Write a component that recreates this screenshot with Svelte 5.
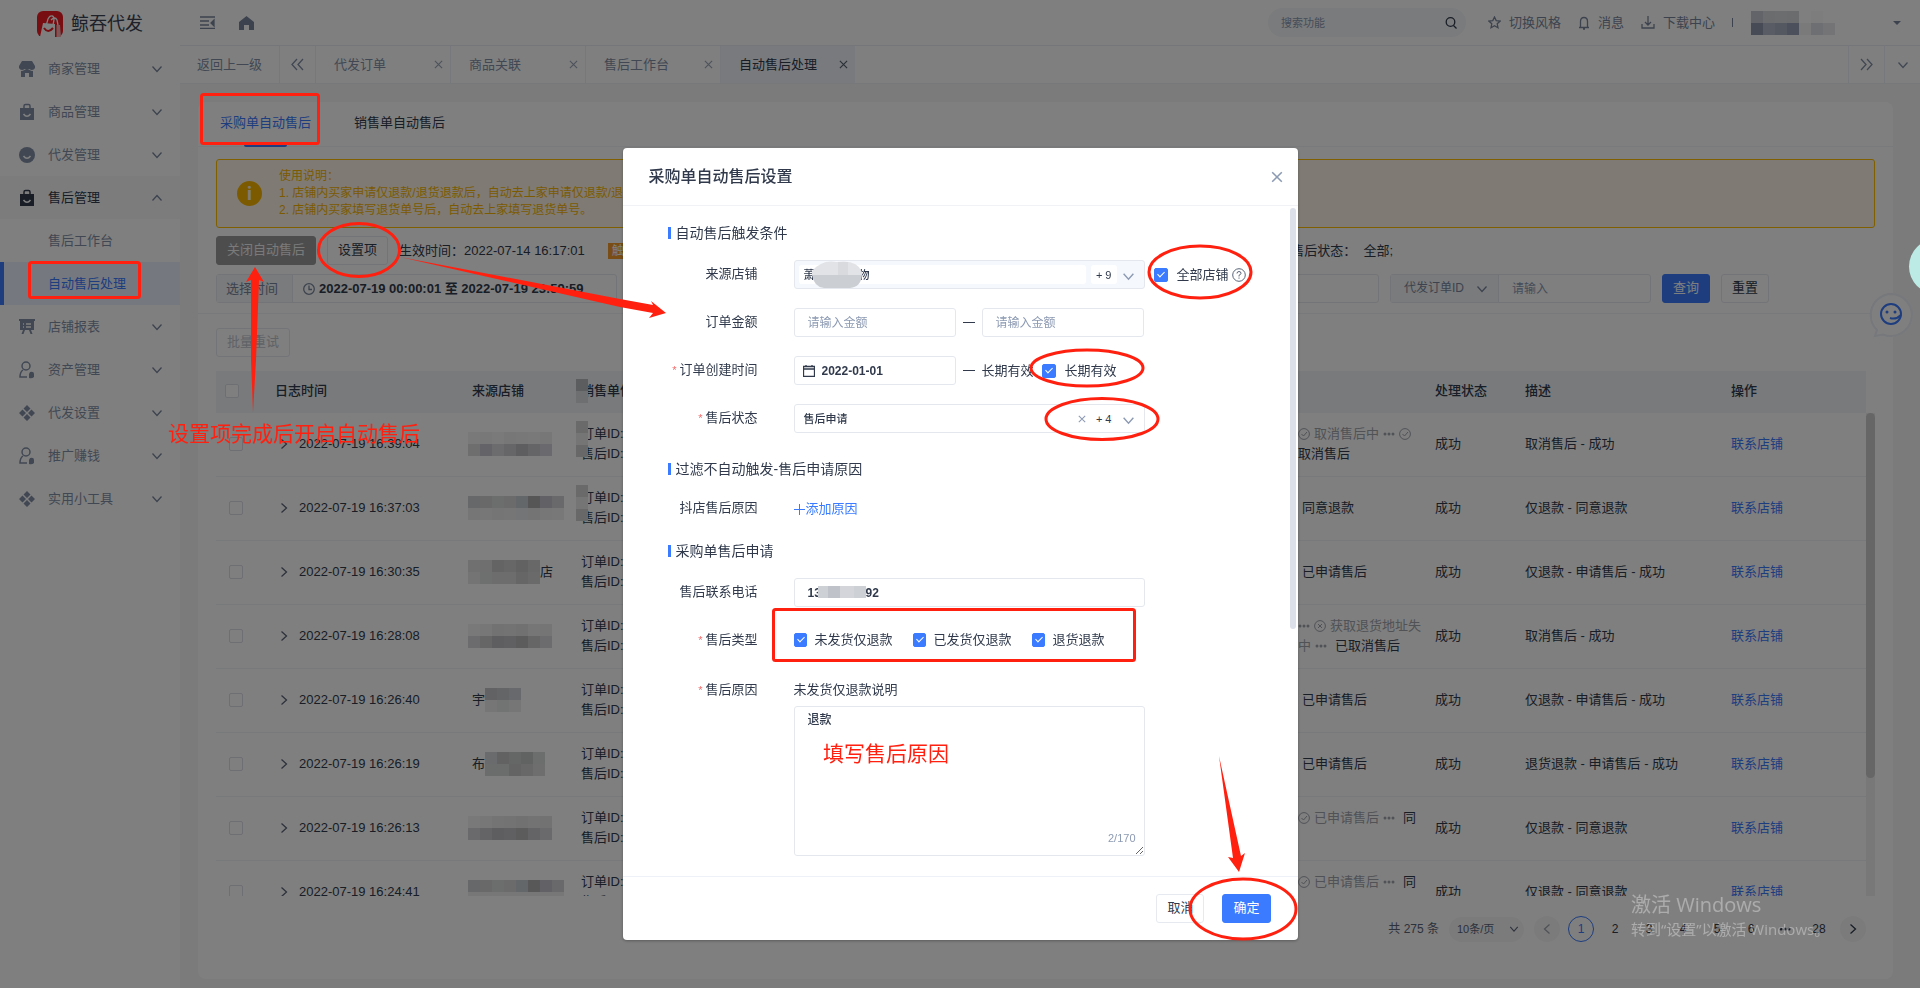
<script>
  const menu = [
    { name: '商家管理', icon: 'shop' },
    { name: '商品管理', icon: 'bag' },
    { name: '代发管理', icon: 'smile' },
    {
      name: '售后管理',
      icon: 'bag',
      open: true,
      children: ['售后工作台', '自动售后处理']
    },
    { name: '店铺报表', icon: 'board' },
    { name: '资产管理', icon: 'user' },
    { name: '代发设置', icon: 'grid' },
    { name: '推广赚钱', icon: 'user' },
    { name: '实用小工具', icon: 'grid' }
  ];

  const pageTabs = ['代发订单', '商品关联', '售后工作台', '自动售后处理'];
  const activePage = '自动售后处理';

  // masks hide shop names, one colour per 12px block
  const rows = [
    {
      time: '2022-07-19 16:39:04',
      mask: [['#f2f2f2', '#f0f0f0', '#f4f4f4', '#eee', '#f0f0f0', '#f2f2f2', '#eee'], ['#ddd', '#c8c9d0', '#d8d8dc', '#ccccd0', '#bdbcc0', '#cbcbcf', '#d4d4dc']],
      steps: [['ok', '取消售后中', 'dots', 'ok'], ['=取消售后']],
      desc: '取消售后 - 成功'
    },
    {
      time: '2022-07-19 16:37:03',
      mask: [['#cfd0d3', '#d2d2d4', '#d8dadb', '#d6d6d8', '#c9ced3', '#acacae', '#c5c4cc', '#d2d2d8'], ['#ececec', '#eee', '#eaeaea', '#ededed', '#e8eaec', '#e8e8e8', '#eee', '#f0f0f0']],
      steps: [['-同意退款']],
      desc: '仅退款 - 同意退款'
    },
    {
      time: '2022-07-19 16:30:35',
      mask: [['#e0e0e0', '#dedede', '#c8c8c8', '#cecece', '#c4c4c4', '#d0d0d0'], ['#e8e8e8', '#dcdfdf', '#dadada', '#dadada', '#ccc', '#d4d4d4']],
      tail: '店',
      steps: [['-已申请售后']],
      desc: '仅退款 - 申请售后 - 成功'
    },
    {
      time: '2022-07-19 16:28:08',
      mask: [['#f2f2f2', '#eee', '#e4e4e4', '#e6e6e6', '#e2e2e2', '#ececec', '#eaeaea'], ['#d8d8dc', '#ccc', '#bcbdc2', '#c0c0c4', '#b8b8ba', '#ccc', '#d8d8dc']],
      steps: [['dots', 'fail', '获取退货地址失'], ['中', 'dots', '=已取消售后']],
      desc: '取消售后 - 成功'
    },
    {
      time: '2022-07-19 16:26:40',
      lead: '宇',
      mask: [['#c4c5c8', '#c8cace', '#d0d2d8'], ['#ececec', '#e4e7e6', '#ececec']],
      steps: [['-已申请售后']],
      desc: '仅退款 - 申请售后 - 成功'
    },
    {
      time: '2022-07-19 16:26:19',
      lead: '布',
      mask: [['#d4d6d8', '#c4c4c4', '#cacccc', '#c2c4c4', '#d8dada'], ['#d6d8d8', '#d6d8d8', '#c8c8c8', '#d0d0d0', '#dcdcdc']],
      steps: [['-已申请售后']],
      desc: '退货退款 - 申请售后 - 成功'
    },
    {
      time: '2022-07-19 16:26:13',
      mask: [['#f2f2f2', '#eee', '#e8e8e8', '#e6e6e6', '#e2e2e2', '#e6e6e6', '#e4e4e4'], ['#d4d4d8', '#c8c8cc', '#bcbdc2', '#c0c0c4', '#b8b8ba', '#c8c8cc', '#d4d4d8']],
      steps: [['ok', '已申请售后', 'dots', '=同'], []],
      desc: '仅退款 - 同意退款'
    },
    {
      time: '2022-07-19 16:24:41',
      mask: [['#cfd0d3', '#d2d2d4', '#d8dadb', '#d6d6d8', '#c9ced3', '#b0b0b2', '#c5c4cc', '#d2d2d8'], ['#eee', '#eee', '#eee', '#eee', '#eee', '#eee', '#eee', '#eee']],
      steps: [['ok', '已申请售后', 'dots', '=同'], []],
      desc: '仅退款 - 同意退款'
    }
  ];

  const pages = ['1', '2', '3', '4', '5', '6', '…', '28'];

  let types = $state([
    { name: '未发货仅退款', checked: true },
    { name: '已发货仅退款', checked: true },
    { name: '退货退款', checked: true }
  ]);
  let reason = $state('退款');
  let allShops = $state(true);
  let longTerm = $state(true);
</script>

{#snippet chevron(dir = 'down', size = 12)}
  <svg class="chevron {dir}" width={size} height={size} viewBox="0 0 12 12"><path d="M1.5 3.5 6 8.5l4.500-5" /></svg>
{/snippet}

{#snippet cross(size = 9)}
  <svg class="line" width={size} height={size} viewBox="0 0 10 10"><path d="m1 1 8 8M9 1 1 9" /></svg>
{/snippet}

{#snippet dots()}
  <svg class="fill" width="12" height="4" viewBox="0 0 12 4"><circle cx="2" cy="2" r="1.500" /><circle cx="6" cy="2" r="1.500" /><circle cx="10" cy="2" r="1.500" /></svg>
{/snippet}

{#snippet mask(blocks)}
  <svg width={blocks[0].length * 12} height={blocks.length * 12} shape-rendering="crispEdges">
    {#each blocks as line, y}
      {#each line as color, x}
        <rect x={x * 12} y={y * 12} width="12" height="12" fill={color} />
      {/each}
    {/each}
  </svg>
{/snippet}

{#snippet menuIcon(name)}
  <svg class="menu-icon" width="18" height="18" viewBox="0 0 18 18">
    {#if name === 'shop'}
      <path d="M4 1h10l3 5v2q-1 2-3 2-1.500 0-2.500-1-1 1-2.500 1T6.500 9q-1 1-2.500 1-2 0-3-2V6z" />
      <path d="M3 11q2 0 3.500-1h5q1.500 1 3.500 1v6h-4v-4H7v4H3z" />
    {:else if name === 'bag'}
      <path d="M2 5h14v12H2z" />
      <path class="stroke" d="M6 5V3q0-1.500 1.500-1.500h3Q12 1.500 12 3v2" />
      <path class="cut" d="M5.500 11q3.500 4.500 7 0" />
    {:else if name === 'smile'}
      <circle cx="9" cy="9" r="8" />
      <path class="cut" d="M5.500 10q3.500 4.500 7 0" />
    {:else if name === 'board'}
      <path d="M1 1h16v2H1zM2 3h14v9H2zM5 12h2l-1.500 4h-2zM11 12h2l1.500 4h-2z" />
      <path class="cut" d="M5 6h1M8 6h5M5 9h1M8 9h5" />
    {:else if name === 'user'}
      <circle class="stroke" cx="8" cy="5" r="4" />
      <path class="stroke" d="M5 9Q2 11 2 16h7" />
      <path d="M12 11q4-1 4 2v3q-2 2-5 1v-4z" />
    {:else}
      <path d="m9 1 3.500 3.500L9 8 5.500 4.500zM4.500 5.500 8 9l-3.500 3.500L1 9zM13.500 5.500 17 9l-3.500 3.500L10 9zM9 10l3.500 3.500L9 17l-3.500-3.500z" />
    {/if}
  </svg>
{/snippet}

<div class="layout">
  <aside class="sidebar">
    <div class="logo">
      <svg width="26" height="26" viewBox="0 0 26 26">
        <rect width="26" height="26" rx="6" fill="#f01c24" />
        <path d="m6 12 12 1v13H3z" fill="#fff" />
        <path d="M19.500 14H23l1 12h-4.500z" fill="#f8b0b2" />
        <path d="M9 15 11 8q2-4 4-3 2 0 2 4l-1 5M14 9q4-4 6 0l1 5" fill="none" stroke="#fff" stroke-width="1.300" />
        <path d="M7 17q4 6 9 0" fill="none" stroke="#f01c24" stroke-width="2" />
      </svg>
      <span>鲸吞代发</span>
    </div>
    <nav>
      {#each menu as item}
        <a class="menu-item" class:open={item.open} href="#menu">
          {@render menuIcon(item.icon)}
          <span>{item.name}</span>
          {@render chevron(item.open ? 'up' : 'down', 12)}
        </a>
        {#each item.children ?? [] as child}
          <a class="sub-item" class:active={child === activePage} href="#sub">{child}</a>
        {/each}
      {/each}
    </nav>
  </aside>

  <div class="main">
    <header class="topbar">
      <svg class="line" width="15" height="13" viewBox="0 0 15 13"><path d="M0 1h15M0 5h9M0 9h9M0 12.500h15" /><path class="solid" d="m14 4-3 3 3 3z" /></svg>
      <svg class="fill home" width="15" height="14" viewBox="0 0 15 14"><path d="M7.500 0 15 6v8h-5V9H5v5H0V6z" /></svg>
      <label class="search">
        <input type="text" placeholder="搜索功能" aria-label="搜索功能" />
        <svg width="12" height="12" viewBox="0 0 12 12"><circle cx="5.500" cy="5" r="4.300" /><path d="m8.500 8.500 3 3" /></svg>
      </label>
      <div class="top-links">
        <a href="#theme">
          <svg class="line" width="13" height="13" viewBox="0 0 13 13"><path d="m6.500 1 1.700 3.600 3.900.5-2.900 2.700.8 3.900-3.500-1.900L3 11.700l.8-3.900L.9 5.100l3.900-.5z" /></svg>
          切换风格
        </a>
        <a href="#message">
          <svg class="line" width="12" height="14" viewBox="0 0 12 14"><path d="M1 11.500h10M2.500 11V5.500q0-4 3.500-4t3.500 4V11M5 13h2" /></svg>
          消息
        </a>
        <a href="#download">
          <svg class="line" width="14" height="13" viewBox="0 0 14 13"><path d="M1 8v4h12V8M7 0v9M4 6l3 3 3-3" /></svg>
          下载中心
        </a>
        <i class="bar"></i>
      </div>
      <div class="account">
        {@render mask([['#c5c9d4', '#d6d8dc', '#d8dadf', '#d6d8dd', '#fff', '#fafafa', '#fff'], ['#8f97ab', '#b3b9c8', '#a9b0c2', '#98a1b8', '#f4f4f4', '#dcdee4', '#e8e9ee']])}
        <i class="caret"></i>
      </div>
    </header>

    <div class="page-tabs">
      <a class="back" href="#back">返回上一级</a>
      <button class="nav-btn" aria-label="向左">
        <svg class="line" width="13" height="13" viewBox="0 0 13 13"><path d="M6 1 1 6.500 6 12M12 1 7 6.500l5 5.500" /></svg>
      </button>
      {#each pageTabs as tab}
        <div class="page-tab" class:active={tab === activePage}>
          <span>{tab}</span>
          <button aria-label="关闭{tab}">{@render cross(9)}</button>
        </div>
      {/each}
      <div class="tabs-end">
        <button class="nav-btn" aria-label="向右">
          <svg class="line" width="13" height="13" viewBox="0 0 13 13"><path d="m1 1 5 5.500L1 12M7 1l5 5.500L7 12" /></svg>
        </button>
        <button class="nav-btn" aria-label="更多">{@render chevron()}</button>
      </div>
    </div>

    <section class="card">
      <div class="tabs">
        <a class="tab active" href="#purchase">采购单自动售后</a>
        <a class="tab" href="#sale">销售单自动售后</a>
      </div>

      <div class="card-body">
        <div class="alert">
          <span class="alert-icon">i</span>
          <div>
            <div>使用说明：</div>
            <div>1. 店铺内买家申请仅退款/退货退款后，自动去上家申请仅退款/退货退款。</div>
            <div>2. 店铺内买家填写退货单号后，自动去上家填写退货单号。</div>
          </div>
        </div>

        <div class="toolbar">
          <button class="btn dark">关闭自动售后</button>
          <button class="btn">设置项</button>
          <span>生效时间：2022-07-14 16:17:01</span>
          <span class="tag">触发</span>
          <span class="state">售后状态：&nbsp; 全部;</span>
        </div>

        <div class="filters">
          <div class="group range">
            <span class="addon">选择时间</span>
            <svg class="line" width="12" height="12" viewBox="0 0 12 12"><circle cx="6" cy="6" r="5.300" /><path d="M6 2.500V6.500h3" /></svg>
            <b>2022-07-19 00:00:01 至 2022-07-19 23:59:59</b>
          </div>
          <input class="field" type="text" aria-label="订单编号" />
          <div class="group">
            <div class="select">
              <select aria-label="编号类型"><option>代发订单ID</option></select>
              {@render chevron()}
            </div>
            <input type="text" placeholder="请输入" aria-label="编号" />
          </div>
          <button class="btn primary">查询</button>
          <button class="btn">重置</button>
        </div>

        <button class="btn batch" disabled>批量重试</button>

        <div class="table-wrap">
          <table>
            <colgroup>
              <col class="c-check" /><col class="c-time" /><col class="c-shop" /><col /><col class="c-step" />
              <col class="c-status" /><col class="c-desc" /><col class="c-action" />
            </colgroup>
            <thead>
              <tr>
                <th><input type="checkbox" aria-label="全选" /></th>
                <th>日志时间</th>
                <th>来源店铺</th>
                <th><span class="cover">{@render mask([['#b8babd'], ['#dcdee2']])}</span>销售单信息</th>
                <th></th>
                <th>处理状态</th>
                <th>描述</th>
                <th>操作</th>
              </tr>
            </thead>
            <tbody>
              {#each rows as row, i}
                <tr>
                  <td class="check"><input type="checkbox" aria-label={row.time} /></td>
                  <td><div class="time">{@render chevron('right', 12)}{row.time}</div></td>
                  <td>
                    <div class="shop" class:masked={!row.lead}>{row.lead ?? ''}{@render mask(row.mask)}{row.tail ?? ''}</div>
                  </td>
                  <td>
                    {#if i < 2}
                      <span class="cover">{@render mask([['#d4d4d6'], ['#eaeaea'], ['#d0d0d2']])}</span>
                    {/if}
                    <div>订单ID:</div>
                    <div>售后ID:</div>
                  </td>
                  <td>
                    {#each row.steps as line}
                      <div class="steps">
                        {#each line as step}
                          {#if step === 'dots'}
                            {@render dots()}
                          {:else if step === 'ok'}
                            <svg class="thin" width="12" height="12" viewBox="0 0 12 12"><circle cx="6" cy="6" r="5.400" /><path d="m3.500 6 2 2 3.500-4" /></svg>
                          {:else if step === 'fail'}
                            <svg class="thin" width="12" height="12" viewBox="0 0 12 12"><circle cx="6" cy="6" r="5.400" /><path d="m4 4 4 4M8 4 4 8" /></svg>
                          {:else if step[0] === '-'}
                            <span class="result">{step.slice(1)}</span>
                          {:else if step[0] === '='}
                            <span class:result={line.length > 1} class:strong={line.length === 1}>{step.slice(1)}</span>
                          {:else}
                            <span>{step}</span>
                          {/if}
                        {/each}
                      </div>
                    {/each}
                  </td>
                  <td>成功</td>
                  <td>{row.desc}</td>
                  <td><a href="#contact">联系店铺</a></td>
                </tr>
              {/each}
            </tbody>
          </table>
          <div class="scroll"><i></i></div>
        </div>

        <div class="pagination">
          <span>共 275 条</span>
          <div class="page-size">
            <select aria-label="每页条数"><option>10条/页</option></select>
            {@render chevron('down', 10)}
          </div>
          <button class="page round" aria-label="上一页" disabled>{@render chevron('left', 12)}</button>
          {#each pages as page}
            <button class="page" class:current={page === '1'}>
              {#if page === '…'}{@render dots()}{:else}{page}{/if}
            </button>
          {/each}
          <button class="page round" aria-label="下一页">{@render chevron('right', 12)}</button>
        </div>
      </div>
    </section>
  </div>
</div>

<button class="service" aria-label="客服">
  <svg width="52" height="52" viewBox="0 0 52 52">
    <path class="bubble" d="M26 5a21 21 0 1 1-8 40.500L10 47l2-6A21 21 0 0 1 26 5z" />
    <circle class="ring" cx="26" cy="25" r="10" />
    <circle cx="22" cy="23" r="1.500" /><circle cx="30" cy="23" r="1.500" />
    <path class="ring" d="M36 26q-5 5-11 3" />
  </svg>
</button>

<div class="mask">
  <div class="dialog" role="dialog" aria-labelledby="dialog-title">
    <header>
      <h2 id="dialog-title">采购单自动售后设置</h2>
      <button class="close" aria-label="关闭">{@render cross(12)}</button>
    </header>

    <form class="dialog-body" onsubmit={(e) => e.preventDefault()}>
      <h3>自动售后触发条件</h3>
      <div class="row">
        <label for="shops">来源店铺</label>
        <button type="button" id="shops" class="multi filled">
          <span class="chip">萧<svg width="52" height="28" viewBox="0 0 50 28">
            <path d="M0 10Q10-2 25 1q20-3 25 10v3H0z" fill="#e2e3e6" /><path d="M0 14h50q-1 12-12 13H12Q2 26 0 14z" fill="#cbced3" />
            <path d="M26 1h10v13H26z" fill="#d8dade" />
          </svg>物</span>
          <span class="count">+ 9</span>
          {@render chevron('down', 13)}
        </button>
        <label class="box all"><input type="checkbox" bind:checked={allShops} />全部店铺</label>
        <svg class="help" width="14" height="14" viewBox="0 0 14 14"><circle cx="7" cy="7" r="6.300" /><path d="M5 5.500Q5 3.500 7 3.500t2 1.800Q9 6.500 7 7.300v1.200M7 9.500v1.200" /></svg>
      </div>
      <div class="row">
        <label for="min">订单金额</label>
        <input id="min" class="short" type="text" placeholder="请输入金额" />
        <i class="dash"></i>
        <input class="short" type="text" placeholder="请输入金额" aria-label="最高金额" />
      </div>
      <div class="row">
        <label class="required" for="start">订单创建时间</label>
        <div class="date">
          <svg class="line" width="12" height="12" viewBox="0 0 12 12"><path d="M.5 1.500h11v10H.5zM.5 4h11M3 0v2M9 0v2" /></svg>
          <input id="start" type="text" value="2022-01-01" />
        </div>
        <i class="dash"></i>
        <span>长期有效</span>
        <label class="box term"><input type="checkbox" bind:checked={longTerm} />长期有效</label>
      </div>
      <div class="row">
        <label class="required" for="status">售后状态</label>
        <button type="button" id="status" class="multi">
          <span class="chip">售后申请</span>
          {@render cross(8)}
          <span class="count">+ 4</span>
          {@render chevron('down', 13)}
        </button>
      </div>

      <h3>过滤不自动触发-售后申请原因</h3>
      <div class="row plain">
        <span class="label">抖店售后原因</span>
        <a href="#add"><svg class="line" width="11" height="11" viewBox="0 0 11 11"><path d="M5.500 0v11M0 5.500h11" /></svg>添加原因</a>
      </div>

      <h3>采购单售后申请</h3>
      <div class="row">
        <label for="phone">售后联系电话</label>
        <div class="phone">
          <input id="phone" type="text" value="13" />
          <svg width="48" height="26" viewBox="0 0 48 26"><path d="M0 6h48v12H0z" fill="#cdd0d5" /><path d="M10 6h12v12H10z" fill="#bfc2c8" /><path d="M22 6h14v12H22z" fill="#d3d5da" /></svg>
          <b>92</b>
        </div>
      </div>
      <div class="row">
        <span class="label required">售后类型</span>
        {#each types as type}
          <label class="box type"><input type="checkbox" bind:checked={type.checked} />{type.name}</label>
        {/each}
      </div>
      <div class="row top">
        <label class="required" for="reason">售后原因</label>
        <div class="reason">
          <p>未发货仅退款说明</p>
          <textarea id="reason" bind:value={reason}></textarea>
          <span class="counter">{reason.length}/170</span>
        </div>
      </div>
      <i class="dialog-scroll"></i>
    </form>

    <footer>
      <button class="btn">取消</button>
      <button class="btn primary">确定</button>
    </footer>
  </div>
</div>

<i class="float-ball"></i>

<div class="watermark">
  <div class="big">激活 Windows</div>
  <div>转到“设置”以激活 Windows。</div>
</div>

<!-- tutorial marks drawn over the page -->
<svg class="marks" width="1920" height="988" viewBox="0 0 1920 988">
  <g class="outline">
    <rect x="201.500" y="94.500" width="117" height="49" rx="2" />
    <rect x="29.500" y="262.500" width="110" height="35" rx="2" />
    <rect x="773.500" y="609.500" width="361" height="51" rx="2" />
    <ellipse cx="359" cy="250" rx="40.500" ry="26.500" />
    <ellipse cx="1200" cy="272" rx="51" ry="26" />
    <ellipse cx="1087" cy="368" rx="56" ry="18" />
    <ellipse cx="1102" cy="419" rx="56" ry="20.500" />
    <ellipse cx="1243" cy="909" rx="53" ry="30" />
  </g>
  <path d="M400 257 620 299l33 6-2-4 15 12-17 5 4-5-33-6z" />
  <path d="m255 267 9 15-5-2-3 80-3 52-2-52 0-80-5 2z" />
  <path d="m1219 756 22 100 4-3-6 19-11-15 5 1z" />
  <text x="168" y="441">设置项完成后开启自动售后</text>
  <text x="823" y="761">填写售后原因</text>
</svg>

<style>
  :global(body) {
    margin: 0;
    font-family: "Liberation Sans", "Noto Sans CJK SC", sans-serif;
    font-size: 13px;
    line-height: 20px;
    color: #303a4c;
    overflow: hidden;
  }

  a {
    color: inherit;
    text-decoration: none;
  }

  button,
  input,
  select,
  textarea {
    font: inherit;
    color: inherit;
    box-sizing: border-box;
    outline: none;
  }

  button {
    padding: 0;
    border: 0;
    background: none;
    cursor: pointer;
  }

  input::placeholder {
    color: #8c9ab3;
    opacity: 1;
  }

  svg {
    display: block;
    flex: none;
  }

  .line,
  .thin,
  .chevron {
    fill: none;
    stroke: currentColor;
    stroke-width: 1.3;
  }

  .thin {
    stroke-width: 1;
  }

  .fill,
  .solid {
    fill: currentColor;
  }

  .chevron.up {
    transform: rotate(180deg);
  }

  .chevron.left {
    transform: rotate(90deg);
  }

  .chevron.right {
    transform: rotate(-90deg);
  }

  input[type="checkbox"] {
    appearance: none;
    flex: none;
    width: 14px;
    height: 14px;
    margin: 0;
    border: 1px solid #dcdfe6;
    border-radius: 2px;
    background: #fff;
    position: relative;
  }

  input[type="checkbox"]:checked {
    background: #3a7bff;
    border-color: #3a7bff;
  }

  input[type="checkbox"]:checked::after {
    content: "";
    position: absolute;
    left: 4px;
    top: 1px;
    width: 3px;
    height: 6px;
    border: solid #fff;
    border-width: 0 1px 1px 0;
    transform: rotate(45deg);
  }

  .layout {
    display: flex;
    min-height: 100vh;
    background: #f6f7f8;
  }

  .sidebar {
    width: 180px;
    flex: none;
    background: #fff;
    color: #8390a6;
  }

  .logo {
    display: flex;
    align-items: center;
    gap: 8px;
    height: 47px;
    padding-left: 37px;
    box-sizing: border-box;
    font-size: 18px;
    color: #3c4353;
  }

  .menu-item {
    display: flex;
    align-items: center;
    gap: 12px;
    height: 43px;
    padding: 0 17px 0 18px;
  }

  .menu-item span {
    flex: 1;
  }

  .menu-item.open {
    background: #f8f9fa;
    color: #303a4c;
  }

  .menu-item .chevron {
    color: #7a879d;
  }

  .menu-icon {
    fill: currentColor;
  }

  .menu-icon .stroke {
    fill: none;
    stroke: currentColor;
    stroke-width: 1.5;
  }

  .menu-icon .cut {
    fill: none;
    stroke: #fff;
    stroke-width: 1.5;
  }

  .sub-item {
    display: flex;
    align-items: center;
    height: 43px;
    padding-left: 44px;
    border-left: 4px solid transparent;
  }

  .sub-item.active {
    background: #ebf1ff;
    border-color: #3a7bff;
    color: #3a7bff;
  }

  .main {
    flex: 1;
    min-width: 0;
    display: flex;
    flex-direction: column;
  }

  .topbar {
    display: flex;
    align-items: center;
    height: 46px;
    padding: 0 19px 0 20px;
    box-sizing: border-box;
    background: #fff;
    border-bottom: 1px solid #e9edf5;
    color: #7a879d;
  }

  .home {
    margin-left: 24px;
  }

  .search {
    display: flex;
    align-items: center;
    width: 198px;
    height: 29px;
    padding: 0 9px 0 13px;
    margin: 0 22px 0 auto;
    box-sizing: border-box;
    border-radius: 15px;
    background: #f4f6f8;
  }

  .search input {
    flex: 1;
    min-width: 0;
    padding: 0;
    border: 0;
    background: none;
    font-size: 11px;
  }

  .search svg {
    fill: none;
    stroke: #303a4c;
    stroke-width: 1.3;
  }

  .top-links {
    display: flex;
    align-items: center;
    gap: 17px;
  }

  .top-links a {
    display: flex;
    align-items: center;
    gap: 8px;
  }

  .bar {
    width: 1px;
    height: 9px;
    background: #7a879d;
  }

  .account {
    display: flex;
    align-items: center;
    gap: 58px;
    margin-left: 18px;
  }

  .caret {
    border: 4px solid transparent;
    border-top-color: currentColor;
    border-bottom: 0;
  }

  .page-tabs {
    display: flex;
    height: 37px;
    background: #fff;
    border-bottom: 1px solid #eef0f4;
    color: #8390a6;
  }

  .back {
    display: flex;
    align-items: center;
    width: 99px;
    padding-left: 17px;
    box-sizing: border-box;
  }

  .nav-btn {
    display: flex;
    align-items: center;
    justify-content: center;
    width: 36px;
    border-left: 1px solid #eef1f6;
  }

  .page-tab {
    display: flex;
    align-items: center;
    justify-content: space-between;
    width: 135px;
    padding: 0 7px 0 18px;
    box-sizing: border-box;
    border-left: 1px solid #eef1f6;
  }

  .page-tab.active {
    background: #f2f5fa;
    color: #303a4c;
  }

  .page-tab button {
    opacity: 0.8;
  }

  .tabs-end {
    display: flex;
    margin-left: auto;
  }

  .card {
    flex: 1;
    margin: 18px 27px 9px 18px;
    background: #fff;
    border-radius: 8px;
  }

  .tabs {
    display: flex;
    gap: 43px;
    height: 44px;
    padding: 0 22px;
    border-bottom: 1px solid #f2f4f8;
  }

  .tab {
    display: flex;
    align-items: center;
    padding-bottom: 2px;
    position: relative;
  }

  .tab.active {
    color: #3a7bff;
  }

  .tab.active::after {
    content: "";
    position: absolute;
    left: 24px;
    right: 24px;
    bottom: -1px;
    height: 5px;
    border-radius: 2px;
    background: #3a7bff;
  }

  .card-body {
    padding: 12px 18px 0;
  }

  .alert {
    display: flex;
    align-items: center;
    gap: 17px;
    height: 69px;
    padding-left: 20px;
    box-sizing: border-box;
    border: 1px solid #ffbf00;
    border-radius: 3px;
    background: #fff6e8;
    color: #f7b500;
    font-size: 12px;
    line-height: 17px;
    white-space: nowrap;
  }

  .alert-icon {
    width: 25px;
    height: 25px;
    border-radius: 50%;
    background: #f7b500;
    color: #fff6e8;
    font: bold 18px/25px "Noto Sans", sans-serif;
    text-align: center;
  }

  .btn {
    height: 29px;
    padding: 0 10px 2px;
    border: 1px solid #e6e9ef;
    border-radius: 3px;
    background: #fff;
    white-space: nowrap;
  }

  .btn.primary {
    background: #3a7bff;
    border-color: #3a7bff;
    color: #fff;
  }

  .btn.dark {
    background: #9a9a9a;
    border-color: #9a9a9a;
    color: #f4f4f4;
  }

  .btn:disabled {
    color: #c0c4cc;
  }

  .toolbar {
    display: flex;
    align-items: center;
    gap: 11px;
    margin-top: 8px;
    padding-right: 482px;
  }

  .tag {
    margin-left: 12px;
    padding: 0 4px;
    background: #f49a2c;
    color: #fff;
    font-size: 12px;
    line-height: 16px;
  }

  .state {
    margin-left: auto;
  }

  .filters {
    display: flex;
    gap: 11px;
    margin: 9px -18px 14px;
    padding: 0 124px 10px 18px;
    border-bottom: 1px solid #f0f2f6;
  }

  .field {
    flex: 1;
    min-width: 0;
    border: 1px solid #e6e9ef;
    border-radius: 3px;
  }

  .group {
    display: flex;
    align-items: stretch;
    height: 29px;
    box-sizing: border-box;
    border: 1px solid #e6e9ef;
    border-radius: 3px;
  }

  .group input {
    width: 151px;
    padding: 0 13px;
    border: 0;
    background: none;
    font-size: 12px;
  }

  .range {
    width: 401px;
    align-items: center;
  }

  .range svg {
    margin: 0 4px 0 10px;
    color: #7a879d;
  }

  .addon,
  .select {
    width: 76px;
    box-sizing: border-box;
    padding-left: 9px;
    background: #f4f6f9;
    border-right: 1px solid #e6e9ef;
    line-height: 27px;
    color: #7a879d;
  }

  .select {
    display: flex;
    align-items: center;
    width: 108px;
    padding: 0 10px 0 13px;
    font-size: 12px;
  }

  select {
    appearance: none;
    flex: 1;
    min-width: 0;
    padding: 0;
    border: 0;
    background: none;
  }

  .batch {
    display: block;
  }

  .table-wrap {
    position: relative;
    height: 525px;
    margin-top: 14px;
    padding-right: 9px;
    overflow: hidden;
  }

  table {
    width: 100%;
    table-layout: fixed;
    border-collapse: separate;
    border-spacing: 0;
  }

  .c-check { width: 59px; }
  .c-time { width: 197px; }
  .c-shop { width: 109px; }
  .c-step { width: 137px; }
  .c-status { width: 90px; }
  .c-desc { width: 206px; }
  .c-action { width: 135px; }

  th {
    height: 42px;
    padding: 0 0 3px;
    box-sizing: border-box;
    background: #f2f5f8;
    font-weight: 500;
    text-align: left;
    position: relative;
  }

  td {
    height: 64px;
    padding: 0 0 1px;
    box-sizing: border-box;
    border-bottom: 1px solid #f0f2f6;
    white-space: nowrap;
    position: relative;
  }

  th input {
    display: block;
    left: 9px;
  }

  td.check {
    padding-left: 13px;
  }

  td input {
    display: block;
  }

  td a {
    color: #3a7bff;
  }

  .time,
  .shop,
  .steps {
    display: flex;
    align-items: center;
  }

  .time {
    gap: 9px;
    padding-left: 3px;
  }

  .time svg {
    color: #5a6478;
  }

  .masked {
    margin-left: -4px;
  }

  .cover {
    position: absolute;
    left: -5px;
    top: 8px;
  }

  .steps {
    gap: 4px;
    height: 20px;
    color: #a0a4ac;
  }

  .result {
    padding-left: 4px;
    color: #303a4c;
  }

  .strong {
    color: #303a4c;
  }

  .scroll {
    position: absolute;
    top: 42px;
    right: 0;
    bottom: 0;
    width: 9px;
    background: #f0f0f0;
  }

  .scroll i {
    display: block;
    height: 365px;
    border-radius: 5px;
    background: #ccc;
  }

  .pagination {
    display: flex;
    align-items: center;
    justify-content: flex-end;
    gap: 8px;
    margin: 20px 9px 0 0;
    color: #303a4c;
  }

  .pagination > span {
    color: #5a6478;
    font-size: 12px;
  }

  .page-size {
    display: flex;
    align-items: center;
    width: 75px;
    height: 25px;
    margin: 0 2px;
    padding: 0 5px 0 8px;
    box-sizing: border-box;
    border-radius: 13px;
    background: #f6f7f9;
    color: #5a6478;
    font-size: 11px;
  }

  .page {
    display: flex;
    align-items: center;
    justify-content: center;
    width: 26px;
    height: 26px;
    box-sizing: border-box;
    border-radius: 50%;
    font-size: 12px;
  }

  .page.round {
    background: #f6f7f9;
  }

  .page:disabled {
    color: #a0a4ac;
  }

  .page.current {
    border: 1px solid #3a7bff;
    color: #3a7bff;
  }

  .service {
    position: fixed;
    top: 289px;
    right: 3px;
  }

  .service svg {
    fill: #3a7bff;
  }

  .service .bubble {
    fill: #fff;
    stroke: #eef0f8;
    stroke-width: 2;
  }

  .service .ring {
    fill: none;
    stroke: #3a7bff;
    stroke-width: 2;
  }

  .mask {
    position: fixed;
    inset: 0;
    background: rgba(0, 0, 0, 0.5);
  }

  .dialog {
    width: 675px;
    margin: 15vh auto 0;
    background: #fff;
    border-radius: 4px;
    box-shadow: 0 1px 3px rgba(0, 0, 0, 0.3);
  }

  .dialog header {
    display: flex;
    align-items: center;
    justify-content: space-between;
    height: 57px;
    padding: 0 15px 0 26px;
    border-bottom: 1px solid #f0f2f6;
  }

  h2 {
    margin: 0;
    font-size: 16px;
    font-weight: 500;
  }

  .close {
    color: #8c9ab3;
  }

  .dialog-body {
    position: relative;
    padding: 10px 45px 1px;
    font-size: 13px;
  }

  h3 {
    margin: 0 0 17px;
    padding: 7px 0 0 8px;
    font-size: 14px;
    font-weight: 400;
    position: relative;
  }

  h3::before {
    content: "";
    position: absolute;
    left: 0;
    top: 11px;
    width: 3px;
    height: 12px;
    background: #3a7bff;
  }

  .row {
    display: flex;
    align-items: center;
    min-height: 29px;
    margin-bottom: 19px;
  }

  .row.plain {
    min-height: 26px;
    margin-bottom: 12px;
  }

  .row.top {
    align-items: flex-start;
  }

  .row > label:first-child,
  .label {
    width: 90px;
    margin-right: 36px;
    padding-bottom: 2px;
    text-align: right;
  }

  .row.top > label:first-child {
    padding-top: 6px;
  }

  .required::before {
    content: "*";
    margin-right: 3px;
    color: #f56c6c;
    font-size: 11px;
  }

  .row a {
    display: flex;
    align-items: center;
    gap: 1px;
    color: #3a7bff;
  }

  .row a svg {
    stroke-width: 1;
  }

  .multi,
  .date,
  .phone,
  .short {
    display: flex;
    align-items: center;
    height: 29px;
    box-sizing: border-box;
    border: 1px solid #e4e8ee;
    border-radius: 3px;
  }

  .multi,
  .phone {
    width: 351px;
  }

  .multi {
    gap: 5px;
    padding: 0 9px 0 4px;
    font-size: 11px;
    font-weight: 500;
  }

  .multi.filled {
    background: #f5f8fd;
  }

  .multi .chevron {
    margin-top: 4px;
    color: #8c9ab3;
  }

  .multi .line {
    color: #8c9ab3;
  }

  .chip,
  .count {
    display: flex;
    align-items: center;
    height: 19px;
    padding: 0 5px;
    border-radius: 3px;
    background: #fff;
  }

  .chip {
    flex: 1;
  }

  .chip svg {
    margin: 0 -4px;
    z-index: 1;
  }

  .date,
  .short {
    width: 162px;
    padding: 0 13px;
    font-size: 12px;
  }

  .date {
    gap: 7px;
    padding: 0 8px;
  }

  .date input,
  .phone input {
    width: 100px;
    padding: 0;
    border: 0;
    font-weight: 600;
  }

  .dash {
    width: 12px;
    height: 1px;
    margin: 0 7px;
    background: #303a4c;
  }

  .phone {
    padding-left: 13px;
    font-size: 12px;
  }

  .phone input {
    width: 12px;
  }

  .phone svg {
    margin-left: -2px;
    z-index: 1;
  }

  .box {
    display: flex;
    align-items: center;
    gap: 9px;
  }

  .all {
    margin: 0 3px 0 9px;
  }

  .term {
    margin-left: 8px;
  }

  .type {
    gap: 8px;
    margin-right: 20px;
    padding-bottom: 2px;
  }

  .box.type input {
    width: 13px;
  }

  .help {
    fill: none;
    stroke: #5a6478;
  }

  .reason {
    position: relative;
    padding-top: 6px;
  }

  .reason p {
    margin: 0 0 6px;
  }

  textarea {
    display: block;
    width: 351px;
    height: 150px;
    padding: 3px 13px;
    border: 1px solid #e4e8ee;
    border-radius: 3px;
    font-size: 12px;
    font-weight: 500;
  }

  .counter {
    position: absolute;
    right: 9px;
    bottom: 8px;
    font-size: 11px;
    color: #8c9ab3;
  }

  .dialog-scroll {
    position: absolute;
    top: 2px;
    right: 2px;
    width: 6px;
    height: 421px;
    border-radius: 3px;
    background: #dce0e8;
  }

  footer {
    display: flex;
    justify-content: flex-end;
    gap: 18px;
    padding: 17px 27px;
    border-top: 1px solid #eef2f8;
  }

  .float-ball {
    position: fixed;
    top: 239px;
    right: -44px;
    width: 55px;
    height: 55px;
    border-radius: 50%;
    background: #bbebe4;
  }

  .watermark {
    position: fixed;
    top: 893px;
    right: 95px;
    width: 194px;
    font-family: "Open Sans", "Noto Sans CJK SC", sans-serif;
    font-size: 15px;
    line-height: 24px;
    color: rgba(255, 255, 255, 0.35);
    white-space: nowrap;
    pointer-events: none;
  }

  .big {
    font-size: 20px;
  }

  .marks {
    position: absolute;
    left: 0;
    top: 0;
    fill: #ff2010;
    font-size: 21px;
    pointer-events: none;
  }

  .outline {
    fill: none;
    stroke: #ff2010;
    stroke-width: 3;
  }
</style>
